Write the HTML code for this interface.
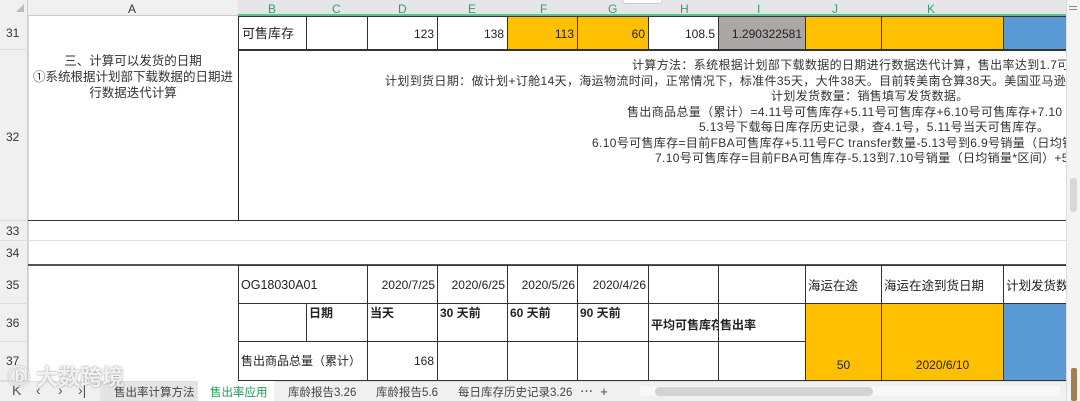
<!DOCTYPE html>
<html><head><meta charset="utf-8"><style>
*{margin:0;padding:0;box-sizing:border-box}
body{width:1080px;height:401px;overflow:hidden;background:#fff;font-family:"Liberation Sans","Noto Sans CJK SC",sans-serif;font-size:12px;color:#222;position:relative}
.a{position:absolute;white-space:nowrap}
.c{position:absolute;border:1px solid #333;overflow:hidden;white-space:nowrap;line-height:1}
.hl{position:absolute;background:#dcdcdc}
</style></head><body>
<div class="a" style="left:0;top:0;width:1066px;height:16px;background:#f0f0f0;border-bottom:1px solid #ccc"></div>
<div class="a" style="left:238px;top:0;width:828px;height:16px;background:#e4e6e8;border-bottom:2px solid #5bbf8e"></div>
<div class="a" style="left:0;top:0;width:28px;height:401px;background:#f0f0f0;border-right:1px solid #ccc"></div>
<div class="a" style="left:16px;top:4px;width:0;height:0;border-left:8px solid transparent;border-bottom:8px solid #bbb"></div>
<div class="a" style="top:2px;left:128px;font-size:12px;color:#333">A</div>
<div class="a" style="top:2px;left:268px;color:#3a9c6d">B</div>
<div class="a" style="top:2px;left:332px;color:#3a9c6d">C</div>
<div class="a" style="top:2px;left:398px;color:#3a9c6d">D</div>
<div class="a" style="top:2px;left:468px;color:#3a9c6d">E</div>
<div class="a" style="top:2px;left:540px;color:#3a9c6d">F</div>
<div class="a" style="top:2px;left:608px;color:#3a9c6d">G</div>
<div class="a" style="top:2px;left:680px;color:#3a9c6d">H</div>
<div class="a" style="top:2px;left:757px;color:#3a9c6d">I</div>
<div class="a" style="top:2px;left:832px;color:#3a9c6d">J</div>
<div class="a" style="top:2px;left:927px;color:#3a9c6d">K</div>
<div class="a" style="left:622px;top:0;width:41px;height:4px;background:#fff;border:1px solid #ccc;border-top:none;border-radius:0 0 4px 4px"></div>
<div class="a" style="left:6px;top:26px;color:#333">31</div>
<div class="a" style="left:6px;top:130px;color:#333">32</div>
<div class="a" style="left:6px;top:224px;color:#333">33</div>
<div class="a" style="left:6px;top:246px;color:#333">34</div>
<div class="a" style="left:6px;top:278px;color:#333">35</div>
<div class="a" style="left:6px;top:316px;color:#333">36</div>
<div class="a" style="left:6px;top:354px;color:#333">37</div>
<div class="hl" style="left:0;top:49px;width:28px;height:1px"></div>
<div class="hl" style="left:0;top:220px;width:1066px;height:1px"></div>
<div class="hl" style="left:0;top:240px;width:1066px;height:1px"></div>
<div class="hl" style="left:0;top:303px;width:28px;height:1px"></div>
<div class="hl" style="left:0;top:341px;width:28px;height:1px"></div>
<div class="hl" style="left:0;top:380px;width:28px;height:1px"></div>
<div class="hl" style="left:28px;top:16px;width:1px;height:365px"></div>
<div class="c" style="left:238px;top:16px;width:69px;height:34px;padding:10px 3px;font-size:13px">可售库存</div>
<div class="c" style="left:306px;top:16px;width:62px;height:34px"></div>
<div class="c" style="left:367px;top:16px;width:71px;height:34px;text-align:right;padding:11px 3px">123</div>
<div class="c" style="left:437px;top:16px;width:71px;height:34px;text-align:right;padding:11px 3px">138</div>
<div class="c" style="left:507px;top:16px;width:71px;height:34px;background:#fec000;text-align:right;padding:11px 3px">113</div>
<div class="c" style="left:577px;top:16px;width:72px;height:34px;background:#fec000;text-align:right;padding:11px 3px">60</div>
<div class="c" style="left:648px;top:16px;width:71px;height:34px;text-align:right;padding:11px 3px">108.5</div>
<div class="c" style="left:718px;top:16px;width:88px;height:34px;background:#aaa7a6;text-align:right;padding:11px 3px">1.290322581</div>
<div class="c" style="left:805px;top:16px;width:77px;height:34px;background:#fec000"></div>
<div class="c" style="left:881px;top:16px;width:123px;height:34px;background:#fec000"></div>
<div class="c" style="left:1003px;top:16px;width:64px;height:34px;background:#5b9bd5"></div>
<div class="a" style="left:28px;width:210px;text-align:center;font-size:12.5px;line-height:16px;white-space:normal;top:53px;color:#333">三、计算可以发货的日期<br>①系统根据计划部下载数据的日期进行数据迭代计算</div>
<div class="a" style="left:238px;top:49px;width:1px;height:172px;background:#222"></div>
<div class="a" style="left:238px;top:49px;width:828px;height:2px;background:#333"></div>
<div class="a" style="left:28px;top:220px;width:1038px;height:1px;background:#333"></div>
<div class="a" style="left:238px;top:50px;width:828px;height:170px;overflow:hidden;font-size:12px;line-height:15.6px;letter-spacing:0.35px;color:#333">
<div class="a" style="left:394px;top:8px">计算方法：系统根据计划部下载数据的日期进行数据迭代计算，售出率达到1.7可</div>
<div class="a" style="left:147px;top:24px">计划到货日期：做计划+订舱14天，海运物流时间，正常情况下，标准件35天，大件38天。目前转美南仓算38天。美国亚马逊</div>
<div class="a" style="left:533px;top:39px">计划发货数量：销售填写发货数据。</div>
<div class="a" style="left:389px;top:55px">售出商品总量（累计）=4.11号可售库存+5.11号可售库存+6.10号可售库存+7.10</div>
<div class="a" style="left:461px;top:70px">5.13号下载每日库存历史记录，查4.1号，5.11号当天可售库存。</div>
<div class="a" style="left:354px;top:86px">6.10号可售库存=目前FBA可售库存+5.11号FC transfer数量-5.13号到6.9号销量（日均销</div>
<div class="a" style="left:417px;top:101px">7.10号可售库存=目前FBA可售库存-5.13到7.10号销量（日均销量*区间）+5</div>
</div>
<div class="a" style="left:28px;top:264px;width:1038px;height:2px;background:#555"></div>
<div class="c" style="left:238px;top:265px;width:130px;height:39px;padding:13px 2px;font-size:12.5px">OG18030A01</div>
<div class="c" style="left:367px;top:265px;width:71px;height:39px;text-align:right;padding:13px 2px">2020/7/25</div>
<div class="c" style="left:437px;top:265px;width:71px;height:39px;text-align:right;padding:13px 2px">2020/6/25</div>
<div class="c" style="left:507px;top:265px;width:71px;height:39px;text-align:right;padding:13px 2px">2020/5/26</div>
<div class="c" style="left:577px;top:265px;width:72px;height:39px;text-align:right;padding:13px 2px">2020/4/26</div>
<div class="c" style="left:648px;top:265px;width:71px;height:39px"></div>
<div class="c" style="left:718px;top:265px;width:88px;height:39px"></div>
<div class="c" style="left:805px;top:265px;width:77px;height:39px;padding:14px 2px;font-size:12.5px">海运在途</div>
<div class="c" style="left:881px;top:265px;width:123px;height:39px;padding:14px 2px;font-size:12.5px">海运在途到货日期</div>
<div class="c" style="left:1003px;top:265px;width:64px;height:39px;padding:14px 2px;font-size:12.5px">计划发货数</div>
<div class="c" style="left:238px;top:303px;width:69px;height:39px"></div>
<div class="c" style="left:306px;top:303px;width:62px;height:39px;padding:3px 2px;font-weight:bold">日期</div>
<div class="c" style="left:367px;top:303px;width:71px;height:39px;padding:3px 2px;font-weight:bold">当天</div>
<div class="c" style="left:437px;top:303px;width:71px;height:39px;padding:3px 2px;font-weight:bold">30 天前</div>
<div class="c" style="left:507px;top:303px;width:71px;height:39px;padding:3px 2px;font-weight:bold">60 天前</div>
<div class="c" style="left:577px;top:303px;width:72px;height:39px;padding:3px 2px;font-weight:bold">90 天前</div>
<div class="c" style="left:648px;top:303px;width:71px;height:39px;padding:15px 2px;font-weight:bold">平均可售库存</div>
<div class="c" style="left:718px;top:303px;width:88px;height:39px;padding:15px 2px;font-weight:bold;border-left:none">售出率</div>
<div class="c" style="left:805px;top:303px;width:77px;height:78px;background:#fec000;text-align:center;padding-top:55px">50</div>
<div class="c" style="left:881px;top:303px;width:123px;height:78px;background:#fec000;text-align:center;padding-top:55px">2020/6/10</div>
<div class="c" style="left:1003px;top:303px;width:64px;height:78px;background:#5b9bd5"></div>
<div class="c" style="left:238px;top:341px;width:130px;height:40px;padding:13px 2px;font-size:12px">售出商品总量（累计）</div>
<div class="c" style="left:367px;top:341px;width:71px;height:40px;text-align:right;padding:13px 3px">168</div>
<div class="c" style="left:437px;top:341px;width:71px;height:40px"></div>
<div class="c" style="left:507px;top:341px;width:71px;height:40px"></div>
<div class="c" style="left:577px;top:341px;width:72px;height:40px"></div>
<div class="c" style="left:648px;top:341px;width:71px;height:40px"></div>
<div class="c" style="left:718px;top:341px;width:88px;height:40px"></div>
<div class="a" style="left:1066px;top:0;width:14px;height:401px;background:#f4f4f4;border-left:1px solid #ddd"></div>
<div class="a" style="left:1069px;top:6px;width:8px;height:1px;background:#888"></div>
<div class="a" style="left:1069px;top:9px;width:8px;height:1px;background:#888"></div>
<div class="a" style="left:1070px;top:178px;width:7px;height:34px;background:#d8d8d8;border-radius:3px"></div>
<div class="a" style="left:1071px;top:368px;width:6px;height:33px;background:#a08050;border-radius:2px"></div>
<div class="a" style="left:0;top:381px;width:1066px;height:20px;background:#f0f0f0;border-top:1px solid #ddd"></div>
<div class="a" style="left:12px;top:382px;font-size:14px;color:#555">K</div>
<div class="a" style="left:36px;top:382px;font-size:14px;color:#555">‹</div>
<div class="a" style="left:58px;top:382px;font-size:14px;color:#555">›</div>
<div class="a" style="left:78px;top:382px;font-size:14px;color:#555">›|</div>
<div class="a" style="left:100px;top:382px;width:98px;height:19px;background:#e4e4e4"></div>
<div class="a" style="left:114px;top:384px;font-size:11.5px;color:#444">售出率计算方法</div>
<div class="a" style="left:198px;top:381px;width:76px;height:20px;background:#fff"></div>
<div class="a" style="left:210px;top:384px;font-size:11.5px;color:#1a9d57">售出率应用</div>
<div class="a" style="left:288px;top:384px;font-size:11.5px;color:#444">库龄报告3.26</div>
<div class="a" style="left:376px;top:384px;font-size:11.5px;color:#444">库龄报告5.6</div>
<div class="a" style="left:458px;top:384px;font-size:11.5px;color:#444">每日库存历史记录3.26</div>
<div class="a" style="left:580px;top:381px;font-size:13px;color:#444">⋯&nbsp;&nbsp;+</div>
<div class="a" style="left:640px;top:386px;width:420px;height:10px;background:#f7f7f7"></div>
<div class="a" style="left:655px;top:387px;width:218px;height:9px;background:#d3d3d3;border-radius:5px"></div>
<div class="a" style="left:8px;top:360px;font-size:22px;color:rgba(255,255,255,.85);text-shadow:0 0 2px #888;font-weight:bold">ⓑ 大数跨境</div>
</body></html>
